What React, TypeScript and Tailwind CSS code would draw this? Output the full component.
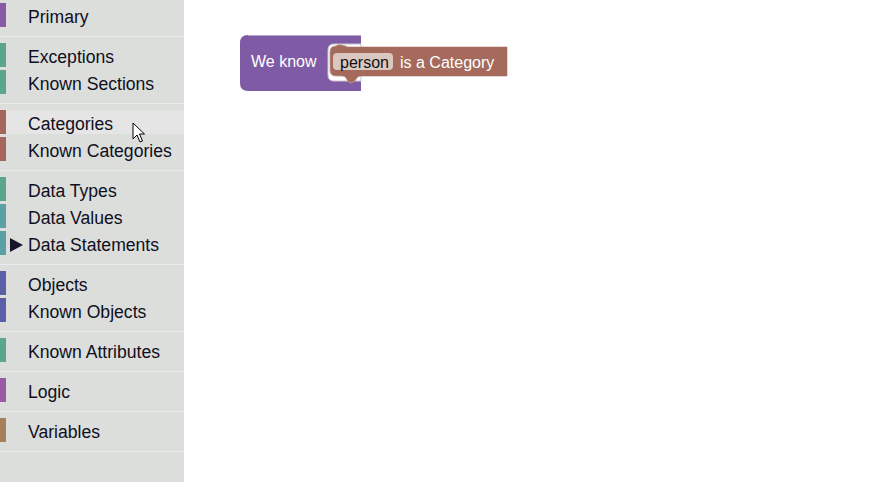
import React from "react";

type Row = { label: string; color: string; hover?: boolean; arrow?: boolean };

const groups: Row[][] = [
  [{ label: "Primary", color: "#875ba5" }],
  [
    { label: "Exceptions", color: "#5ba58d" },
    { label: "Known Sections", color: "#5ba58d" },
  ],
  [
    { label: "Categories", color: "#a5675b", hover: true },
    { label: "Known Categories", color: "#a5675b" },
  ],
  [
    { label: "Data Types", color: "#5ba58d" },
    { label: "Data Values", color: "#5ba0a5" },
    { label: "Data Statements", color: "#5ba0a5", arrow: true },
  ],
  [
    { label: "Objects", color: "#5b5fa5" },
    { label: "Known Objects", color: "#5b5fa5" },
  ],
  [{ label: "Known Attributes", color: "#5ba58d" }],
  [{ label: "Logic", color: "#995ba5" }],
  [{ label: "Variables", color: "#a5805b" }],
];

function ToolboxRow({ row }: { row: Row }) {
  return (
    <div
      className={
        "flex h-[24px] mb-[3px] items-center shrink-0 " +
        (row.hover ? "bg-[#e4e5e4]" : "")
      }
    >
      <div className="w-[6px] h-full shrink-0" style={{ background: row.color }} />
      <div className="w-[22px] h-full shrink-0 flex items-center">
        {row.arrow && (
          <svg width="22" height="24" viewBox="0 0 22 24" className="block">
            <polygon points="4,7 17,14 4,21" fill="#15152b" />
          </svg>
        )}
      </div>
      <span className="text-[17.6px] leading-none text-[#0f0f22] whitespace-nowrap pt-[5px]">
        {row.label}
      </span>
    </div>
  );
}

function Block() {
  return (
    <svg width="300" height="80" viewBox="0 0 300 80" className="block">
      {/* purple statement block */}
      <path
        d="M18 10 H131 V66 H18 Q10 66 10 58 V18 Q10 10 18 10 Z"
        fill="#805ba5"
      />
      <path d="M18 10.5 H131" stroke="#b3a6c9" strokeWidth="1" fill="none" />
      {/* inlet */}
      <path
        d="M131 19 H104 Q98 19 98 25 V50 Q98 56 104 56 H131 Z"
        fill="#ffffff"
        stroke="#c9c4cf"
        strokeWidth="1"
      />
      {/* brown block */}
      <path
        d="M106 21 Q108 19 112 20 Q116 21 118 22 H277 V51 H131 Q128 51 127 53 Q124 58 121 58 Q118 58 116 53 Q115 51 112 51 H106 Q100 51 100 45 V27 Q100 21 106 21 Z"
        fill="#a56a5b"
        stroke="#b79c94"
        strokeWidth="0.8"
      />
      <rect x="118" y="22" width="159" height="29" fill="#a56a5b" />
      {/* field */}
      <rect x="103" y="28" width="60" height="17" rx="4" fill="#dac7c0" />
      <text
        x="110"
        y="42.5"
        fontFamily="'Liberation Sans', Arial, sans-serif"
        fontSize="16"
        fill="#111111"
      >
        person
      </text>
      <text
        x="170"
        y="42.5"
        fontFamily="'Liberation Sans', Arial, sans-serif"
        fontSize="16"
        fill="#ffffff"
      >
        is a Category
      </text>
      <text
        x="21"
        y="42"
        fontFamily="'Liberation Sans', Arial, sans-serif"
        fontSize="16"
        fill="#ffffff"
      >
        We know
      </text>
    </svg>
  );
}

export default function App() {
  return (
    <div
      className="relative flex w-[881px] h-[482px] overflow-hidden bg-white"
      style={{ fontFamily: "'Liberation Sans', Arial, sans-serif" }}
    >
      <div className="w-[184px] h-full shrink-0 bg-[#dcdedc] pt-[3px] flex flex-col">
        {groups.map((g, gi) => (
          <div key={gi} className="flex flex-col shrink-0">
            {g.map((r) => (
              <ToolboxRow key={r.label} row={r} />
            ))}
            <div className="py-[6px] shrink-0">
              <div className="h-px bg-[#e9eae9]" />
            </div>
          </div>
        ))}
      </div>
      <div className="relative flex-1 h-full bg-white">
        <div className="absolute left-[46px] top-[25px]">
          <Block />
        </div>
      </div>
      {/* mouse cursor */}
      <svg
        className="absolute left-[132px] top-[122px]"
        width="14"
        height="22"
        viewBox="0 0 14 22"
      >
        <path
          d="M1 1 L1 17 L5 13 L8 20 L10.5 19 L7.5 12 L12.5 12 Z"
          fill="#ffffff"
          stroke="#000000"
          strokeWidth="1"
          strokeLinejoin="miter"
        />
      </svg>
    </div>
  );
}
